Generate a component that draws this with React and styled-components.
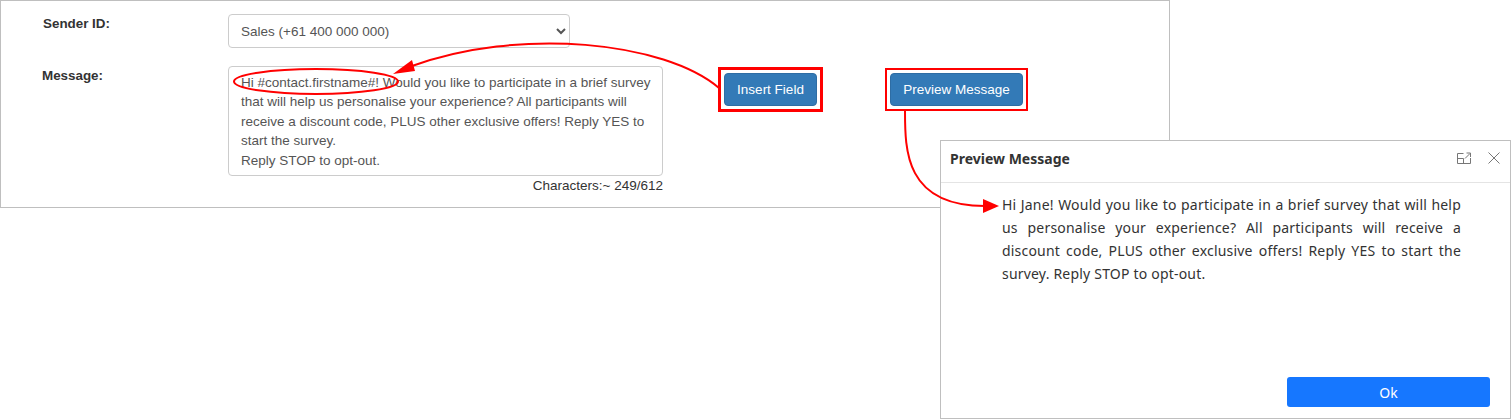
import styled, { createGlobalStyle } from "styled-components";

const GlobalStyle = createGlobalStyle`
  html, body { margin: 0; padding: 0; background: #fff; }
  body { font-family: "Liberation Sans", Arial, sans-serif; font-size: 13.5px; color: #333; }
`;

const Page = styled.div`
  position: relative;
  width: 1511px;
  height: 420px;
  overflow: hidden;
`;

const Panel = styled.section`
  box-sizing: border-box;
  width: 1170px;
  height: 208px;
  padding-top: 13px;
  border: 1px solid #bfbfbf;
  display: flex;
  flex-direction: column;
  gap: 18px;
`;

const Row = styled.div`
  display: grid;
  grid-template-columns: 227px auto;
  align-items: start;
`;

const Label = styled.label`
  padding-left: ${(p) => p.$indent}px;
  padding-top: 2px;
  font-weight: bold;
  font-size: 13.4px;
  color: #333;
`;

const Select = styled.select`
  box-sizing: border-box;
  width: 342px;
  height: 34px;
  padding: 6px 8px;
  font: 13.5px "Liberation Sans", Arial, sans-serif;
  color: #555;
  background: #fff;
  border: 1px solid #ccc;
  border-radius: 4px;
`;

const MessageArea = styled.div`
  display: flex;
  align-items: flex-start;
`;

const Field = styled.div`
  width: 435px;
  display: flex;
  flex-direction: column;
`;

const TextArea = styled.textarea`
  box-sizing: border-box;
  display: block;
  width: 435px;
  height: 110px;
  padding: 6px 8px 6px 12px;
  font: 13.5px/19.4px "Liberation Sans", Arial, sans-serif;
  color: #555;
  border: 1px solid #ccc;
  border-radius: 4px;
  resize: none;
  overflow: hidden;
`;

const Counter = styled.div`
  margin-top: 1px;
  text-align: right;
  line-height: 18px;
  color: #333;
`;

const Actions = styled.div`
  display: flex;
  align-items: center;
  gap: 62px;
  margin-left: 55px;
  margin-top: 1px;
  height: 45px;
`;

const Frame = styled.div`
  border: ${(p) => p.$border}px solid #f00;
  padding: 3px;
`;

const Button = styled.button`
  display: block;
  box-sizing: border-box;
  height: 33px;
  width: ${(p) => p.$width}px;
  padding: 0;
  font: 13.5px "Liberation Sans", Arial, sans-serif;
  color: #fff;
  background: #337ab7;
  border: 1px solid #2e6da4;
  border-radius: 4px;
`;

const Modal = styled.aside`
  position: absolute;
  left: 940px;
  top: 140px;
  box-sizing: border-box;
  width: 571px;
  height: 279px;
  display: flex;
  flex-direction: column;
  background: #fff;
  border: 1px solid #bfbfbf;
  font-family: "Noto Sans", "Open Sans", sans-serif;
`;

const ModalHeader = styled.header`
  box-sizing: border-box;
  height: 42px;
  flex: none;
  display: flex;
  align-items: center;
  padding: 0 10px 6px 9px;
  border-bottom: 1px solid #e4e4e4;
`;

const ModalTitle = styled.h2`
  flex: 1;
  margin: 0;
  font-size: 14px;
  font-weight: bold;
  color: #333;
`;

const HeaderIcons = styled.div`
  display: flex;
  align-items: center;
  gap: 17px;
  margin-top: -2px;
`;

const ModalBody = styled.p`
  width: 459px;
  margin: 0;
  padding: 10px 0 0 61px;
  font-size: 14px;
  line-height: 23px;
  letter-spacing: 0.2px;
  color: #333;
  text-align: justify;
`;

const ModalFooter = styled.footer`
  margin-top: auto;
  padding: 0 20px 11px 0;
  display: flex;
  justify-content: flex-end;
`;

const OkButton = styled.button`
  width: 203px;
  height: 30px;
  padding: 0;
  font: 14px "Noto Sans", "Open Sans", sans-serif;
  color: #fff;
  background: #1677ff;
  border: none;
  border-radius: 3px;
`;

const Annotations = styled.svg`
  position: absolute;
  left: 0;
  top: 0;
  pointer-events: none;
`;

const message = `Hi #contact.firstname#! Would you like to participate in a brief survey that will help us personalise your experience? All participants will receive a discount code, PLUS other exclusive offers! Reply YES to start the survey.
Reply STOP to opt-out.`;

const App = () => (
  <>
    <GlobalStyle />
    <Page>
      <Panel>
        <Row>
          <Label $indent={42}>Sender ID:</Label>
          <Select defaultValue="sales">
            <option value="sales">Sales (+61 400 000 000)</option>
          </Select>
        </Row>
        <Row>
          <Label $indent={41}>Message:</Label>
          <MessageArea>
            <Field>
              <TextArea readOnly defaultValue={message} />
              <Counter>Characters:~ 249/612</Counter>
            </Field>
            <Actions>
              <Frame $border={3}>
                <Button $width={93}>Insert Field</Button>
              </Frame>
              <Frame $border={2}>
                <Button $width={133}>Preview Message</Button>
              </Frame>
            </Actions>
          </MessageArea>
        </Row>
      </Panel>

      <Modal>
        <ModalHeader>
          <ModalTitle>Preview Message</ModalTitle>
          <HeaderIcons>
            <svg width="14" height="12" viewBox="0 0 14 12" fill="none" stroke="#777" strokeWidth="1">
              <path d="M6.5 1.5H.5v10h13V6M.5 6.5h6v5M8 6.5l5-5M9.5 1h4v4" />
            </svg>
            <svg width="12" height="12" viewBox="0 0 12 12" fill="none" stroke="#777" strokeWidth="1">
              <path d="M.5.5l11 11M11.5.5l-11 11" />
            </svg>
          </HeaderIcons>
        </ModalHeader>
        <ModalBody>
          Hi Jane! Would you like to participate in a brief survey that will help us personalise your experience? All participants will receive a discount code, PLUS other exclusive offers! Reply YES to start the survey. Reply STOP to opt-out.
        </ModalBody>
        <ModalFooter>
          <OkButton>Ok</OkButton>
        </ModalFooter>
      </Modal>

      <Annotations width="1511" height="420" fill="none" stroke="#f00" strokeWidth="2">
        <ellipse cx="316" cy="81.5" rx="82" ry="12.5" />
        <path d="M719 88C665 42 520 26 409 67" />
        <path d="M393 74L412 60L415 71Z" fill="#f00" stroke="none" />
        <path d="M905 111C905 150 905 206 985 206" />
        <path d="M999 206L983 199V213Z" fill="#f00" stroke="none" />
      </Annotations>
    </Page>
  </>
);

export default App;
